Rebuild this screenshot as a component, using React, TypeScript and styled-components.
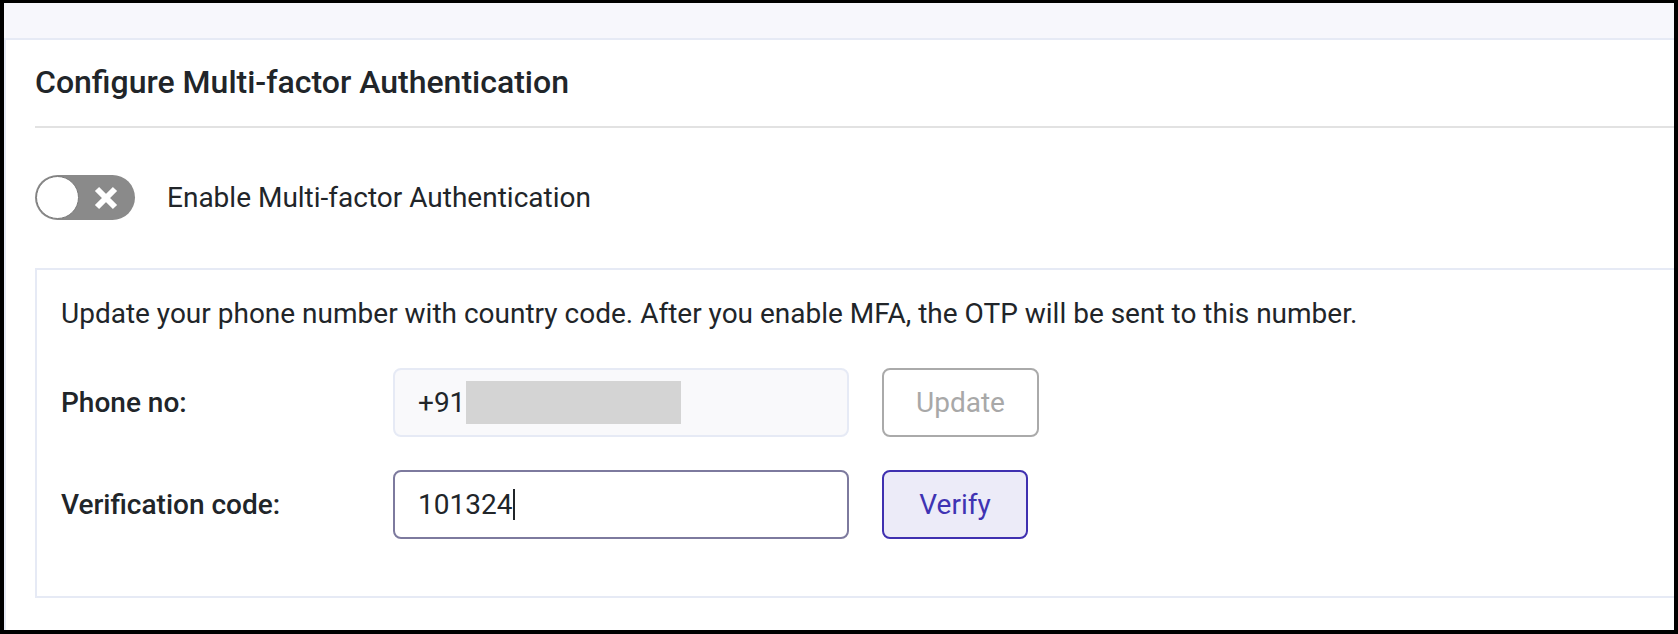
import styled, { createGlobalStyle } from 'styled-components'

const GlobalStyle = createGlobalStyle`
  html, body {
    margin: 0;
    padding: 0;
    background: #000;
  }
  body {
    font-family: Roboto, "Liberation Sans", Arial, sans-serif;
    color: #212529;
  }
  * {
    box-sizing: border-box;
  }
`

const Frame = styled.div`
  margin: 3px 4px 0 4px;
  height: 627px;
  overflow: hidden;
  background: #fff;
`

const TopBand = styled.div`
  height: 37px;
  background: #f7f7fc;
  border-bottom: 2px solid #e6eaf5;
`

const Card = styled.section`
  margin-right: -60px;
  padding: 0 0 0 29px;
  border-left: 2px solid #e6eaf5;
  height: 590px;
`

const Heading = styled.h2`
  margin: 0;
  padding: 22px 0 24px;
  font-size: 32px;
  line-height: 40px;
  font-weight: 500;
  color: #212529;
  border-bottom: 2px solid #e2e2e2;
`

const ToggleRow = styled.label`
  display: flex;
  align-items: center;
  gap: 32px;
  margin-top: 47px;
  font-size: 28px;
  line-height: 40px;
  color: #212529;
`

const Track = styled.span<{ $on?: boolean }>`
  display: flex;
  align-items: center;
  width: 100px;
  height: 45px;
  padding: 1px;
  border-radius: 23px;
  background: ${p => (p.$on ? '#4a3bbf' : '#8a8a8a')};
  flex-shrink: 0;
`

const Knob = styled.span`
  width: 43px;
  height: 43px;
  border-radius: 50%;
  background: #fff;
  border: 1px solid #7a7a7a;
  flex-shrink: 0;
`

const KnobIcon = styled.span`
  flex: 1;
  display: flex;
  justify-content: center;
  align-items: center;
  padding-right: 2px;
`

const Panel = styled.div`
  margin-top: 48px;
  border: 2px solid #e6eaf5;
  padding: 24px 24px 57px;
`

const Hint = styled.p`
  margin: 0 0 34px;
  font-size: 28px;
  line-height: 40px;
  color: #212529;
`

const FieldRow = styled.div`
  display: flex;
  align-items: center;
  & + & {
    margin-top: 33px;
  }
`

const Label = styled.div`
  width: 332px;
  font-size: 28px;
  font-weight: 500;
  color: #212529;
`

const Field = styled.div<{ $disabled?: boolean }>`
  display: flex;
  align-items: center;
  width: 456px;
  height: 69px;
  padding: 0 23px;
  border-radius: 8px;
  font-size: 28px;
  color: #212529;
  background: ${p => (p.$disabled ? '#f9f9fb' : '#fff')};
  border: 2px solid ${p => (p.$disabled ? '#e6eaf5' : '#7d7a9e')};
`

const Redacted = styled.span`
  display: inline-block;
  width: 215px;
  height: 43px;
  background: #d4d4d4;
  margin-left: 1px;
`

const Caret = styled.span`
  display: inline-block;
  width: 2px;
  height: 31px;
  background: #212529;
  margin-left: 1px;
`

const Button = styled.button<{ $variant: 'muted' | 'primary' }>`
  margin-left: 33px;
  height: 69px;
  min-width: 146px;
  padding: 0 32px;
  border-radius: 8px;
  font-family: inherit;
  font-size: 28px;
  cursor: pointer;
  background: ${p => (p.$variant === 'primary' ? '#ecebf8' : '#fff')};
  color: ${p => (p.$variant === 'primary' ? '#3f33b3' : '#a8a8a8')};
  border: 2px solid ${p => (p.$variant === 'primary' ? '#3f30b0' : '#aaaaaa')};
`

function CrossIcon() {
  return (
    <svg width="24" height="24" viewBox="0 0 24 24">
      <path d="M3 3 L21 21 M21 3 L3 21" stroke="#fff" strokeWidth="6" fill="none" />
    </svg>
  )
}

export default function App() {
  return (
    <>
      <GlobalStyle />
      <Frame>
        <TopBand />
        <Card>
          <Heading>Configure Multi-factor Authentication</Heading>

          <ToggleRow>
            <Track>
              <Knob />
              <KnobIcon>
                <CrossIcon />
              </KnobIcon>
            </Track>
            Enable Multi-factor Authentication
          </ToggleRow>

          <Panel>
            <Hint>
              Update your phone number with country code. After you enable MFA, the OTP will be sent to this number.
            </Hint>

            <FieldRow>
              <Label>Phone no:</Label>
              <Field $disabled>
                +91
                <Redacted />
              </Field>
              <Button $variant="muted">Update</Button>
            </FieldRow>

            <FieldRow>
              <Label>Verification code:</Label>
              <Field>
                101324
                <Caret />
              </Field>
              <Button $variant="primary">Verify</Button>
            </FieldRow>
          </Panel>
        </Card>
      </Frame>
    </>
  )
}
